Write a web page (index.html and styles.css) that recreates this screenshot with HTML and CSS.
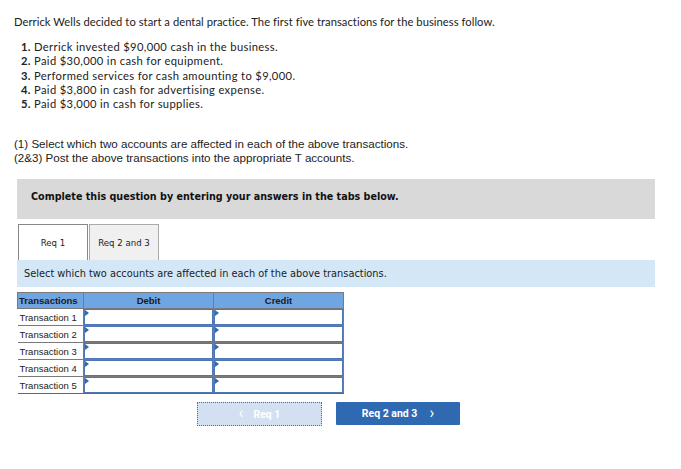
FILE: index.html
```html
<!DOCTYPE html>
<html>
<head>
<meta charset="utf-8">
<link rel="stylesheet" href="styles.css">
</head>
<body>
<div class="page">
  <p class="intro">Derrick Wells decided to start a dental practice. The first five transactions for the business follow.</p>
  <ol class="items">
    <li><b>1.</b> Derrick invested $90,000 cash in the business.</li>
    <li><b>2.</b> Paid $30,000 in cash for equipment.</li>
    <li><b>3.</b> Performed services for cash amounting to $9,000.</li>
    <li><b>4.</b> Paid $3,800 in cash for advertising expense.</li>
    <li><b>5.</b> Paid $3,000 in cash for supplies.</li>
  </ol>
  <div class="req">
    <div>(1) Select which two accounts are affected in each of the above transactions.</div>
    <div>(2&amp;3) Post the above transactions into the appropriate T accounts.</div>
  </div>
  <div class="banner">Complete this question by entering your answers in the tabs below.</div>
  <div class="tabs">
    <div class="tab active">Req 1</div>
    <div class="tab">Req 2 and 3</div>
  </div>
  <div class="instr">Select which two accounts are affected in each of the above transactions.</div>
  <table class="grid">
    <thead>
      <tr><th class="c1">Transactions</th><th class="c2">Debit</th><th class="c3">Credit</th></tr>
    </thead>
    <tbody>
      <tr><td class="lbl">Transaction 1</td><td class="in"><div class="box"></div></td><td class="in"><div class="box"></div></td></tr>
      <tr><td class="lbl">Transaction 2</td><td class="in"><div class="box"></div></td><td class="in"><div class="box"></div></td></tr>
      <tr><td class="lbl">Transaction 3</td><td class="in"><div class="box"></div></td><td class="in"><div class="box"></div></td></tr>
      <tr><td class="lbl">Transaction 4</td><td class="in"><div class="box"></div></td><td class="in"><div class="box"></div></td></tr>
      <tr><td class="lbl">Transaction 5</td><td class="in"><div class="box"></div></td><td class="in"><div class="box"></div></td></tr>
    </tbody>
  </table>
  <div class="nav">
    <div class="btn prev"><span class="chev">&#x2039;</span> Req 1</div>
    <div class="btn next">Req 2 and 3 <span class="chev">&#x203A;</span></div>
  </div>
</div>
</body>
</html>
```
FILE: styles.css
```css
html, body { margin: 0; padding: 0; background: #fff; }
.page { padding: 14px 26px 0 14px; font-family: "Lato", "Liberation Sans", sans-serif; color: #222; }
.intro { margin: 0; font-size: 11.2px; line-height: 14px; letter-spacing: 0.05px; position: relative; top: 1px; }
.items { list-style: none; margin: 12px 0 0 7px; padding: 0; font-size: 11.2px; line-height: 14.3px; letter-spacing: 0.35px; }
.items b { font-weight: 700; }
.req { margin-top: 26px; font-family: "Liberation Sans", sans-serif; font-size: 11.6px; line-height: 14px; color: #222; }
.banner { margin: 14px 0 0 3px; background: #d9d9d9; height: 40px; box-sizing: border-box; display: flex; align-items: center; padding: 0 0 6px 14px; font-family: "DejaVu Sans", Verdana, sans-serif; font-weight: bold; font-size: 9.6px; color: #111; }
.tabs { display: flex; margin: 5px 0 0 4px; }
.tab { width: 68px; height: 35px; display: flex; align-items: center; justify-content: center; font-family: "DejaVu Sans", Verdana, sans-serif; font-size: 8.6px; color: #222; border: 1px solid #aaa; border-bottom: none; background: #f0f0f0; margin-right: 1px; }
.tab.active { background: #fff; border-color: #888; }
.instr { margin-left: 3px; background: #d3e7f7; height: 27px; display: flex; align-items: center; padding-left: 7px; font-family: "DejaVu Sans", Verdana, sans-serif; font-size: 9.8px; color: #222; }
.grid { margin: 5px 0 0 3px; border-collapse: collapse; font-family: "Liberation Sans", sans-serif; font-size: 9.5px; }
.grid th { background: #6fa5e0; height: 15px; padding: 0; border: 1px solid #7a7a7a; font-weight: bold; color: #1a1a1a; }
.grid th.c1 { width: 64px; text-align: left; padding-left: 1px; }
.grid th.c2, .grid th.c3 { width: 129px; }
.grid td { padding: 0; height: 16px; border: 1px solid #7a7a7a; border-left: none; border-right: none; }
.grid tr:last-child td { border-bottom: 1.5px solid #666; }
.grid td.lbl { padding-left: 2px; color: #222; white-space: nowrap; }
.grid td.in { border-left: 1px solid #7a7a7a; border-right: 1px solid #7a7a7a; padding: 0; }
.box { height: 14px; border: 1px solid #4f76b5; position: relative; background: #fff; }
.box::before { content: ""; position: absolute; left: 0; top: 0; border-top: 3px solid transparent; border-bottom: 3px solid transparent; border-left: 4px solid #2f6ab2; }
.nav { display: flex; gap: 14px; margin: 8px 0 0 183px; }
.btn { width: 124px; height: 23px; display: flex; align-items: center; justify-content: center; font-family: "Roboto", "Liberation Sans", sans-serif; font-weight: bold; font-size: 10.5px; color: #fff; }
.btn.prev { background: #d2e0f1; border: 1px dotted #3b6fb6; width: 123px; height: 22px; gap: 10px; }
.btn.next { background: #2f69b1; gap: 12px; border-radius: 1px; }
.chev { font-size: 16px; font-weight: normal; line-height: 10px; position: relative; top: -1px; }
```
